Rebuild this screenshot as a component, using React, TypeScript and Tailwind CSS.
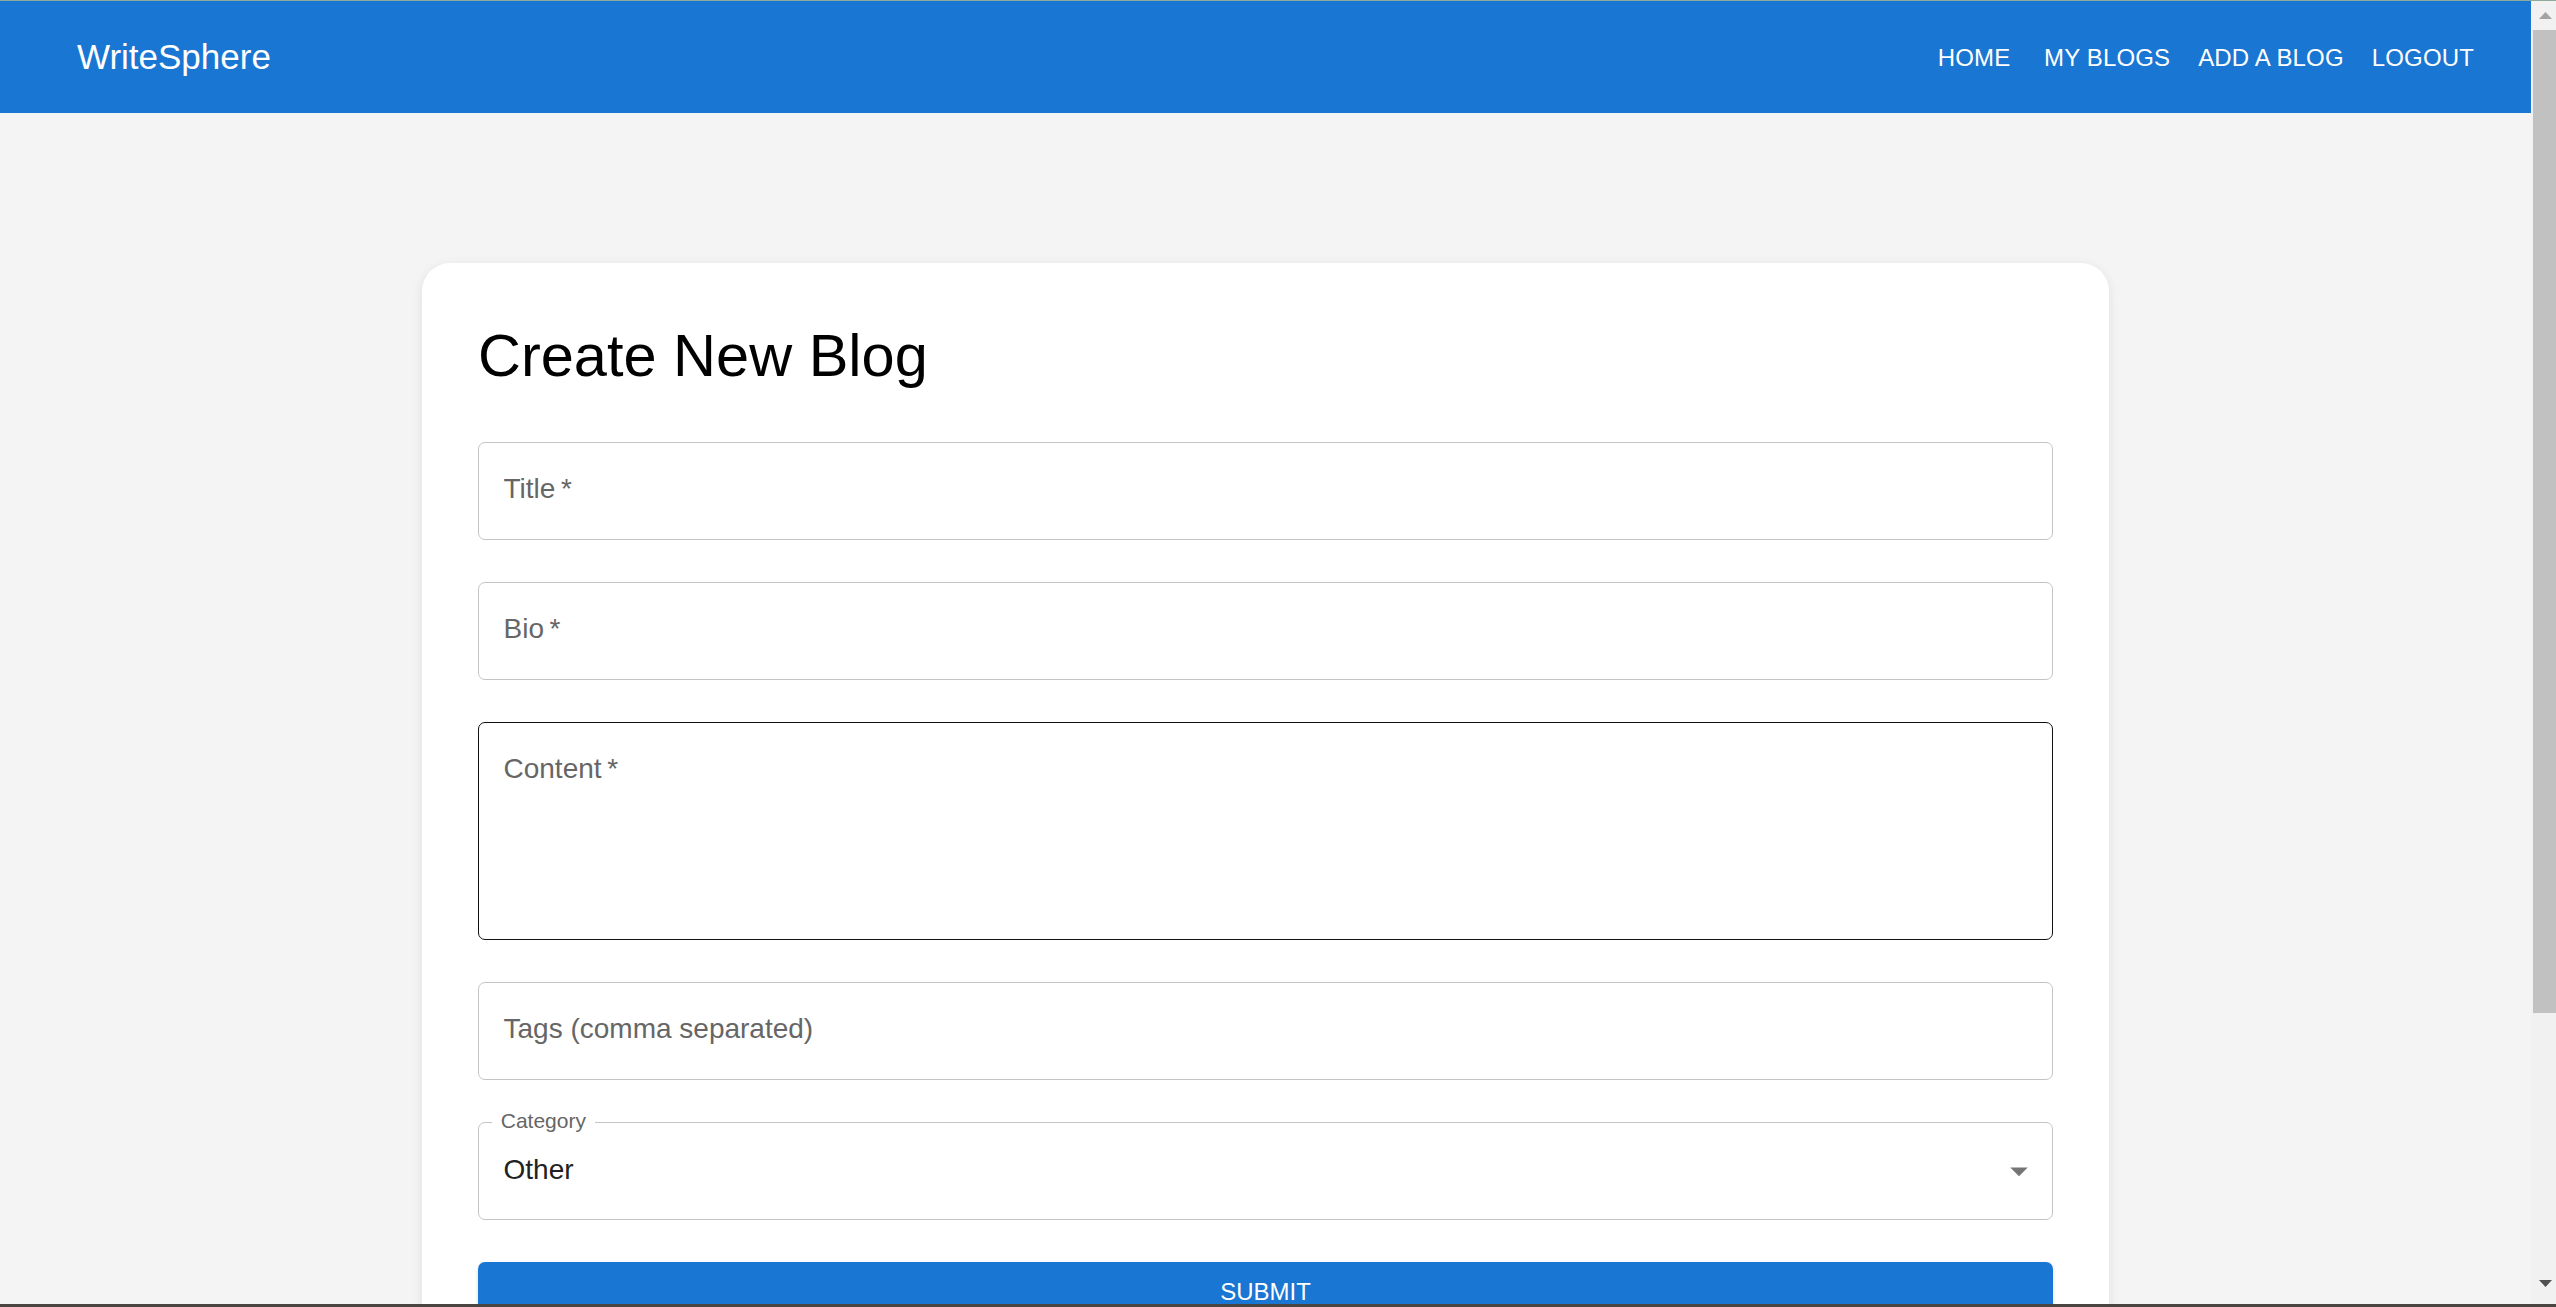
import React from "react";

const navItems = ["HOME", "MY BLOGS", "ADD A BLOG", "LOGOUT"];

function TextField({ label, tall, dark }: { label: string; tall?: boolean; dark?: boolean }) {
  return (
    <div
      className={`w-full rounded-[7px] border bg-white pl-[24.5px] pt-[26px] text-[28px] leading-[40px] text-[#666666] ${
        tall ? "h-[218px]" : "h-[98px]"
      } ${dark ? "border-[#111111]" : "border-[#c4c4c4]"}`}
    >
      {label}
    </div>
  );
}

function SelectField() {
  return (
    <div className="relative flex h-[98px] w-full items-start justify-between rounded-[7px] border border-[#c4c4c4] bg-white pl-[24.5px] pr-[12px]">
      <span className="absolute left-[13px] top-[-17px] bg-white px-[8.75px] text-[21px] leading-[30px] text-[#666666]">
        Category
      </span>
      <span className="pt-[27px] text-[28px] leading-[40px] text-[#212121]">Other</span>
      <svg viewBox="0 0 24 24" className="h-[42px] w-[42px] self-center" fill="#757575">
        <path d="M7 10l5 5 5-5z" />
      </svg>
    </div>
  );
}

function Scrollbar() {
  return (
    <div className="flex w-[25px] shrink-0 flex-col bg-[#f1f1f1]">
      <div className="flex h-[29px] shrink-0 items-center justify-center pl-[3px]">
        <svg width="13" height="7" viewBox="0 0 13 7">
          <path d="M0 7 L6.5 0 L13 7 Z" fill="#a3a3a3" />
        </svg>
      </div>
      <div className="ml-[2px] h-[983px] shrink-0 bg-[#c1c1c1]" />
      <div className="flex-1" />
      <div className="flex h-[26px] shrink-0 items-start justify-center pl-[3px] pt-[2px]">
        <svg width="13" height="7" viewBox="0 0 13 7">
          <path d="M0 0 L13 0 L6.5 7 Z" fill="#505050" />
        </svg>
      </div>
    </div>
  );
}

export default function App() {
  return (
    <div className="flex h-[1307px] w-full flex-col overflow-hidden bg-[#f4f4f4] font-['Liberation_Sans',Arial,sans-serif]">
      <div className="h-px shrink-0 bg-[#8fa99b]" />
      <div className="flex min-h-0 flex-1">
        <div className="flex min-w-0 flex-1 flex-col overflow-hidden">
          <header className="flex h-[112px] shrink-0 items-center justify-between bg-[#1976d2] pl-[77px] pr-[43px] text-white">
            <div className="text-[35px] leading-[56px]">WriteSphere</div>
            <nav className="flex">
              {navItems.map((item) => (
                <button
                  key={item}
                  className="min-w-[112px] px-[14px] py-[10px] text-center text-[24px] leading-[43px] tracking-[0.15px] text-white"
                >
                  {item}
                </button>
              ))}
            </nav>
          </header>
          <main className="flex shrink-0 justify-center pt-[150px]">
            <div className="flex w-[1687px] flex-col rounded-[28px] bg-white px-[56px] pb-[56px] pt-[56px] shadow-[0_3px_12px_rgba(0,0,0,0.09)]">
              <h1 className="mb-[49px] text-[59.5px] leading-[73.5px] text-black">Create New Blog</h1>
              <div className="flex flex-col gap-[42px]">
                <TextField label={"Title\u2009*"} />
                <TextField label={"Bio\u2009*"} />
                <TextField label={"Content\u2009*"} tall dark />
                <TextField label="Tags (comma separated)" />
                <SelectField />
              </div>
              <button className="mt-[42px] flex h-[64px] w-full items-center justify-center rounded-[7px] bg-[#1976d2] pb-[4px] text-[24px] text-white shadow-[0_3px_2px_-2px_rgba(0,0,0,0.2),0_2px_4px_0_rgba(0,0,0,0.14)]">
                SUBMIT
              </button>
            </div>
          </main>
        </div>
        <Scrollbar />
      </div>
      <div className="h-[3px] shrink-0 bg-[#4a4540]" />
    </div>
  );
}
